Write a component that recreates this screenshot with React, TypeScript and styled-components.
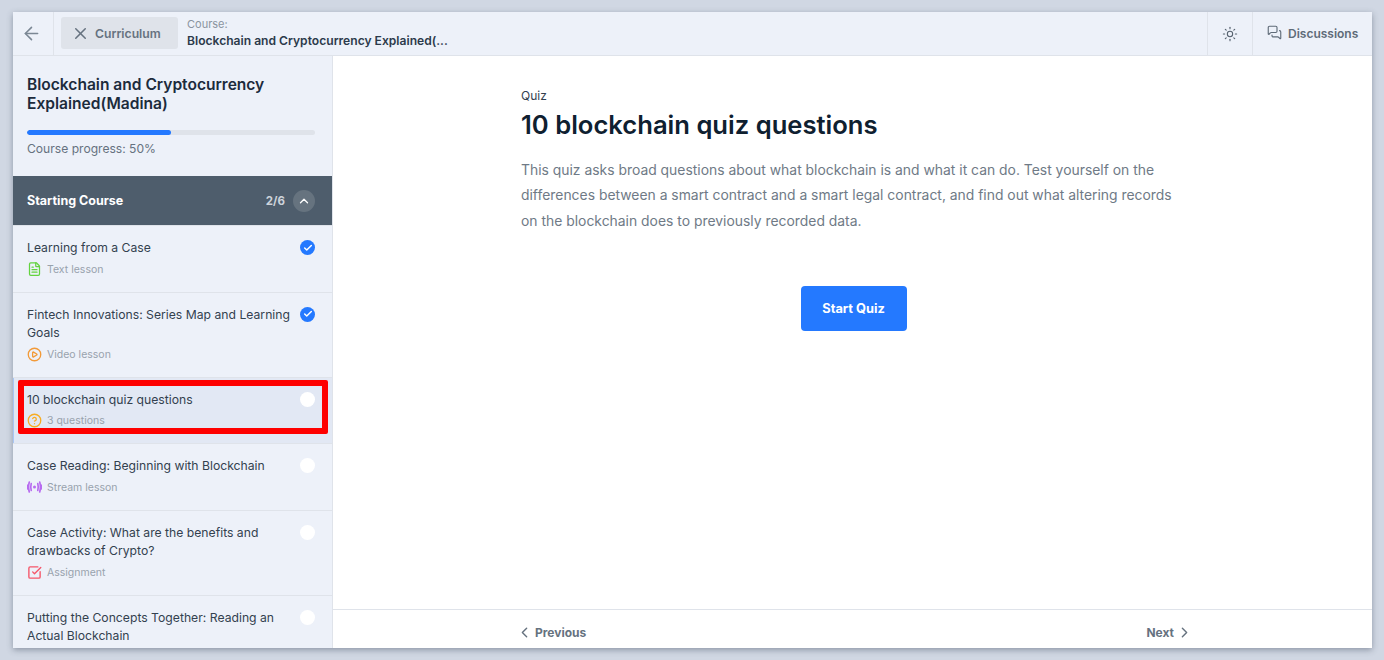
import styled, { createGlobalStyle } from "styled-components";
import {
  ArrowLeft,
  X,
  Sun,
  MessagesSquare,
  ChevronUp,
  ChevronLeft,
  ChevronRight,
  FileText,
  CirclePlay,
  CircleHelp,
  SquareCheckBig,
  Check,
} from "lucide-react";

const lessons = [
  { title: "Learning from a Case", kind: "text", meta: "Text lesson", done: true },
  { title: "Fintech Innovations: Series Map and Learning Goals", kind: "video", meta: "Video lesson", done: true },
  { title: "10 blockchain quiz questions", kind: "quiz", meta: "3 questions", done: false, active: true },
  { title: "Case Reading: Beginning with Blockchain", kind: "stream", meta: "Stream lesson", done: false },
  { title: "Case Activity: What are the benefits and drawbacks of Crypto?", kind: "assignment", meta: "Assignment", done: false },
  { title: "Putting the Concepts Together: Reading an Actual Blockchain", kind: "text", done: false },
];

function StreamIcon() {
  return (
    <svg width="15" height="12" viewBox="0 0 15 12" fill="none" stroke="#b86cf0" strokeWidth="1.7" strokeLinecap="round">
      <circle cx="7.5" cy="6" r="1.5" fill="#b86cf0" stroke="none" />
      <path d="M4.2 2.6c-.6 2.2-.6 4.6 0 6.8" />
      <path d="M2.3 1c-.9 3.2-.9 6.8 0 10" />
      <path d="M.9 4c-.2 1.3-.2 2.7 0 4" />
      <path d="M10.8 2.6c.6 2.2.6 4.6 0 6.8" />
      <path d="M12.7 1c.9 3.2.9 6.8 0 10" />
      <path d="M14.1 4c.2 1.3.2 2.7 0 4" />
    </svg>
  );
}

function KindIcon({ kind }: { kind: string }) {
  if (kind === "text") return <FileText size={18} color="#63d33f" strokeWidth={2} />;
  if (kind === "video") return <CirclePlay size={15} color="#f29a38" strokeWidth={2.1} />;
  if (kind === "quiz") return <CircleHelp size={15} color="#f8ac22" strokeWidth={2.1} />;
  if (kind === "stream") return <StreamIcon />;
  return <SquareCheckBig size={17} color="#f5566a" strokeWidth={2.2} />;
}

export default function App() {
  return (
    <>
      <GlobalStyle />
      <Shell>
        <TopBar>
          <BackCell>
            <ArrowLeft size={21} strokeWidth={1.8} />
          </BackCell>
          <CurriculumButton>
            <X size={19} strokeWidth={1.9} />
            Curriculum
          </CurriculumButton>
          <CourseCrumb>
            <CrumbLabel>Course:</CrumbLabel>
            <CrumbTitle>Blockchain and Cryptocurrency Explained(...</CrumbTitle>
          </CourseCrumb>
          <ThemeCell>
            <Sun size={16} strokeWidth={1.6} />
          </ThemeCell>
          <DiscussionsCell>
            <MessagesSquare size={15} strokeWidth={1.8} />
            Discussions
          </DiscussionsCell>
        </TopBar>
        <Body>
          <Sidebar>
            <SidebarHead>
              <CourseTitle>Blockchain and Cryptocurrency Explained(Madina)</CourseTitle>
              <ProgressTrack>
                <ProgressFill style={{ width: "50%" }} />
              </ProgressTrack>
              <ProgressText>Course progress: 50%</ProgressText>
            </SidebarHead>
            <SectionHead>
              <SectionName>Starting Course</SectionName>
              <SectionCount>2/6</SectionCount>
              <Collapse>
                <ChevronUp size={14} strokeWidth={2.2} />
              </Collapse>
            </SectionHead>
            {lessons.map((l) => (
              <Lesson key={l.title} $active={l.active}>
                <LessonMain>
                  <LessonTitle>{l.title}</LessonTitle>
                  {l.meta && (
                    <LessonMeta>
                      <IconSlot>
                        <KindIcon kind={l.kind} />
                      </IconSlot>
                      {l.meta}
                    </LessonMeta>
                  )}
                </LessonMain>
                <Status $done={l.done}>{l.done && <Check size={10} strokeWidth={3.5} color="#fff" />}</Status>
                {l.active && <Highlight />}
              </Lesson>
            ))}
          </Sidebar>
          <Main>
            <Content>
              <Kicker>Quiz</Kicker>
              <Heading>10 blockchain quiz questions</Heading>
              <Description>
                This quiz asks broad questions about what blockchain is and what it can do. Test yourself on the
                differences between a smart contract and a smart legal contract, and find out what altering records
                on the blockchain does to previously recorded data.
              </Description>
              <ButtonRow>
                <StartButton>Start Quiz</StartButton>
              </ButtonRow>
            </Content>
            <Footer>
              <FooterInner>
                <NavLink>
                  <ChevronLeft size={17} strokeWidth={2} />
                  Previous
                </NavLink>
                <NavLink>
                  Next
                  <ChevronRight size={17} strokeWidth={2} />
                </NavLink>
              </FooterInner>
            </Footer>
          </Main>
        </Body>
      </Shell>
    </>
  );
}

const GlobalStyle = createGlobalStyle`
  html, body {
    margin: 0;
    height: 660px;
    overflow: hidden;
    background: #d0d7e3;
    font-family: "Inter", "Liberation Sans", sans-serif;
  }
  * { box-sizing: border-box; }
`;

const Shell = styled.div`
  margin: 12px 12px 0 13px;
  height: 636px;
  display: flex;
  flex-direction: column;
  background: #fff;
  overflow: hidden;
  box-shadow: 0 2px 6px rgba(60, 70, 90, 0.45);
`;

const TopBar = styled.header`
  height: 44px;
  flex: none;
  display: flex;
  align-items: stretch;
  background: #edf1f9;
  border-bottom: 1px solid #dfe3ea;
`;

const BackCell = styled.div`
  width: 41px;
  padding-right: 3px;
  display: flex;
  align-items: center;
  justify-content: center;
  color: #7b8794;
  border-right: 1px solid #dfe3ea;
`;

const CurriculumButton = styled.div`
  width: 117px;
  height: 32px;
  margin: 5px 9px 0 7px;
  padding-left: 10px;
  display: flex;
  align-items: center;
  gap: 5px;
  border-radius: 3px;
  background: #dfe3ea;
  color: #66727f;
  font-size: 12.2px;
  font-weight: 600;
`;

const CourseCrumb = styled.div`
  flex: 1;
  padding-top: 5px;
`;

const CrumbLabel = styled.div`
  font-size: 11px;
  line-height: 14px;
  color: #8a949f;
`;

const CrumbTitle = styled.div`
  margin-top: 2px;
  font-size: 12.1px;
  line-height: 16px;
  font-weight: 600;
  color: #2c3a4b;
`;

const ThemeCell = styled.div`
  width: 45px;
  display: flex;
  align-items: center;
  justify-content: center;
  color: #55616e;
  border-left: 1px solid #dfe3ea;
`;

const DiscussionsCell = styled.div`
  width: 120px;
  padding-left: 14px;
  display: flex;
  align-items: center;
  gap: 6px;
  color: #5f6b78;
  font-size: 12px;
  font-weight: 600;
  border-left: 1px solid #dfe3ea;

  svg {
    margin-top: -3px;
  }
`;

const Body = styled.div`
  flex: 1;
  min-height: 0;
  display: flex;
`;

const Sidebar = styled.aside`
  width: 320px;
  flex: none;
  background: #edf1f9;
  border-right: 1px solid #dfe3ea;
  overflow: hidden;
`;

const SidebarHead = styled.div`
  height: 120px;
  padding: 19px 17px 0 14px;
`;

const CourseTitle = styled.div`
  font-size: 15.55px;
  line-height: 19px;
  font-weight: 600;
  color: #1c2b3c;
`;

const ProgressTrack = styled.div`
  height: 5px;
  margin-top: 17px;
  border-radius: 3px;
  background: #dfe3ea;
  overflow: hidden;
`;

const ProgressFill = styled.div`
  height: 100%;
  border-radius: 3px;
  background: #2479ff;
`;

const ProgressText = styled.div`
  margin-top: 6px;
  font-size: 12.1px;
  line-height: 16px;
  color: #66727f;
`;

const SectionHead = styled.div`
  height: 49px;
  padding: 0 17px 0 14px;
  display: flex;
  align-items: center;
  background: #4e5d6c;
  color: #fff;
`;

const SectionName = styled.div`
  flex: 1;
  font-size: 12.5px;
  font-weight: 700;
`;

const SectionCount = styled.div`
  margin-right: 8px;
  font-size: 11.5px;
  font-weight: 700;
  color: #cdd3da;
`;

const Collapse = styled.div`
  width: 22px;
  height: 22px;
  display: flex;
  align-items: center;
  justify-content: center;
  border-radius: 50%;
  background: #66737f;
`;

const Lesson = styled.div<{ $active?: boolean }>`
  position: relative;
  padding: 13px 17px 14px 14px;
  display: flex;
  gap: 10px;
  border-top: 1px solid #dfe3ea;
  background: ${(p) => (p.$active ? "#e2e8f4" : "transparent")};
  box-shadow: ${(p) => (p.$active ? "inset 1px 0 0 #a9c6f5" : "none")};
`;

const LessonMain = styled.div`
  flex: 1;
  min-width: 0;
`;

const LessonTitle = styled.div`
  font-size: 12.2px;
  line-height: 18.5px;
  color: #33414f;
`;

const LessonMeta = styled.div`
  margin-top: 3px;
  height: 17px;
  display: flex;
  align-items: center;
  gap: 5px;
  font-size: 10.5px;
  color: #98a2ad;
`;

const IconSlot = styled.span`
  width: 15px;
  display: flex;
  align-items: center;
  justify-content: center;
`;

const Status = styled.div<{ $done?: boolean }>`
  width: 15px;
  height: 15px;
  margin-top: 1px;
  flex: none;
  display: flex;
  align-items: center;
  justify-content: center;
  border-radius: 50%;
  background: ${(p) => (p.$done ? "#2479ff" : "#fff")};
`;

const Highlight = styled.div`
  position: absolute;
  left: 5px;
  right: 4px;
  top: 2px;
  height: 54px;
  border: 6px solid #fe0000;
  border-radius: 2px;
  pointer-events: none;
`;

const Main = styled.main`
  flex: 1;
  min-width: 0;
  display: flex;
  flex-direction: column;
`;

const Content = styled.div`
  flex: 1;
  padding: 32px 0 0 188px;
`;

const Kicker = styled.div`
  font-size: 12px;
  line-height: 16px;
  color: #33414f;
`;

const Heading = styled.h1`
  margin: 4px 0 0;
  font-size: 25.6px;
  line-height: 34px;
  font-weight: 600;
  color: #0f2030;
`;

const Description = styled.p`
  width: 660px;
  margin: 15.5px 0 0;
  font-size: 13.9px;
  line-height: 25.5px;
  color: #6f7a86;
`;

const ButtonRow = styled.div`
  width: 665px;
  margin-top: 52px;
  display: flex;
  justify-content: center;
`;

const StartButton = styled.button`
  width: 106px;
  height: 45px;
  border: 0;
  border-radius: 4px;
  background: #2479ff;
  color: #fff;
  font-family: inherit;
  font-size: 12.8px;
  font-weight: 700;
`;

const Footer = styled.footer`
  height: 39px;
  flex: none;
  border-top: 1px solid #dfe3ea;
`;

const FooterInner = styled.div`
  width: 677px;
  height: 100%;
  margin-left: 183px;
  padding-top: 14px;
  display: flex;
  justify-content: space-between;
`;

const NavLink = styled.div`
  height: 17px;
  display: flex;
  align-items: center;
  gap: 2px;
  font-size: 12px;
  font-weight: 700;
  color: #66727f;
`;
